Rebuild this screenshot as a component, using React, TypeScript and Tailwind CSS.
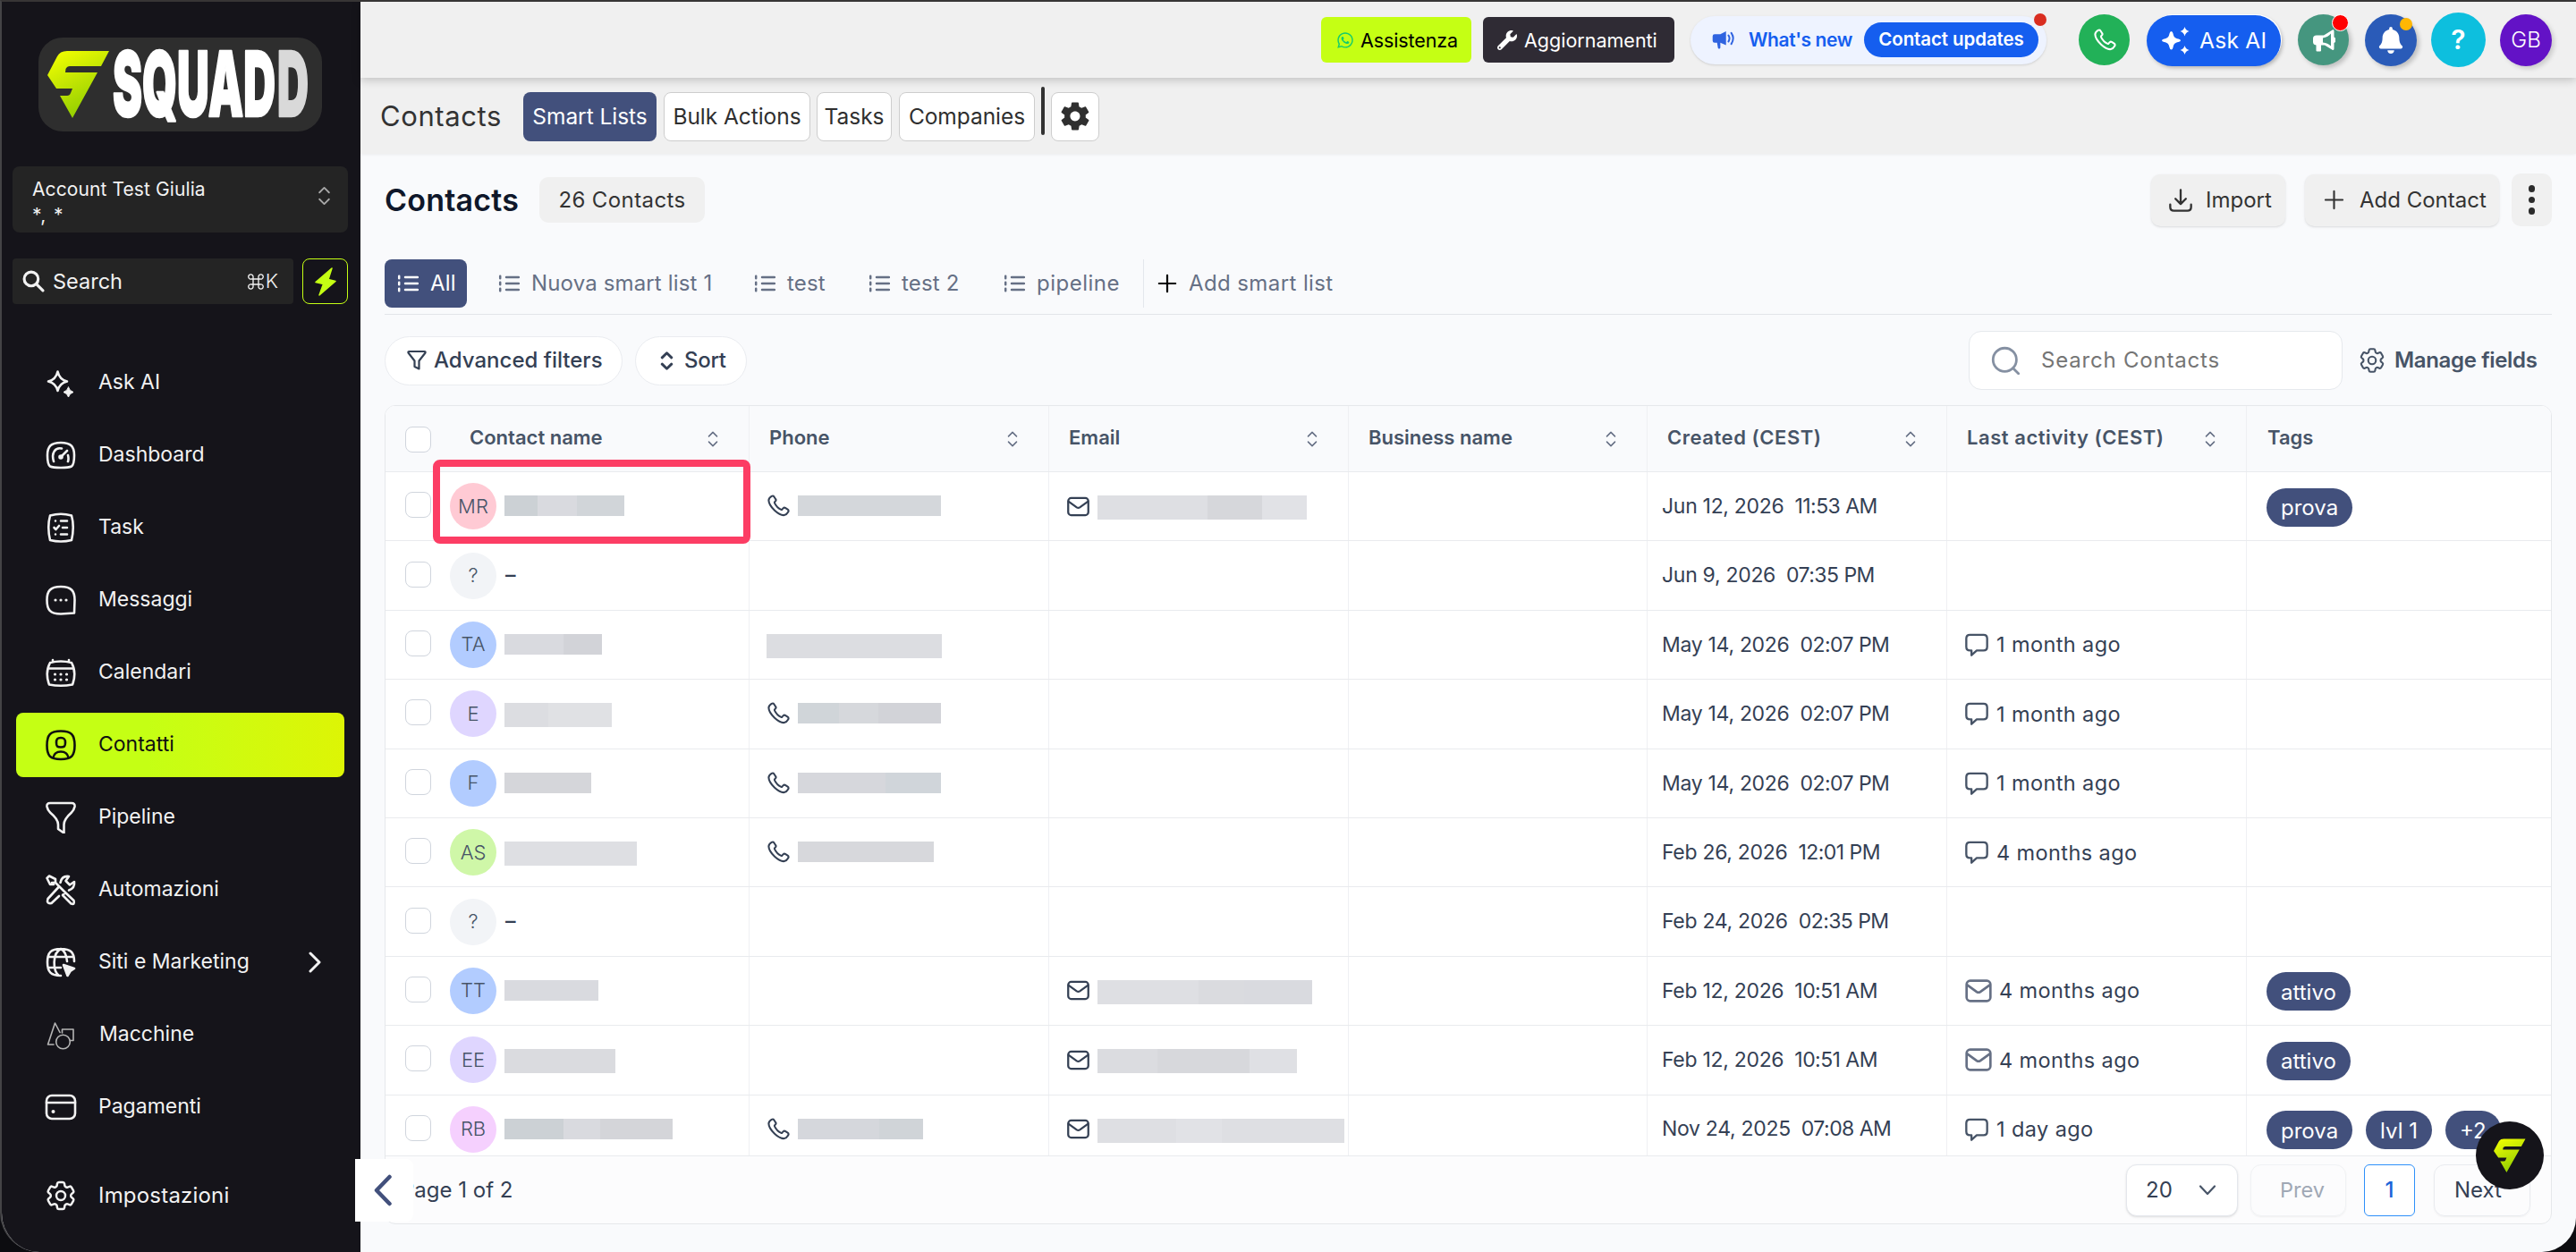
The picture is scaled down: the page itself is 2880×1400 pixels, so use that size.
import React from "react";
import { FaWhatsapp, FaWrench, FaBell } from "react-icons/fa";
import { HiOutlineCog6Tooth } from "react-icons/hi2";
import { IoMdSettings } from "react-icons/io";

type P = { className?: string };

function Svg({ className = "", box = 24, sw = 2, children }: P & { box?: number; sw?: number; children: React.ReactNode }) {
  return (
    <svg viewBox={`0 0 ${box} ${box}`} className={`shrink-0 ${className}`} fill="none" stroke="currentColor" strokeWidth={sw} strokeLinecap="round" strokeLinejoin="round">
      {children}
    </svg>
  );
}

/* ---------- brand ---------- */

function Mark({ className = "", id }: P & { id: string }) {
  return (
    <svg viewBox="0 0 70 76" preserveAspectRatio="none" className={`shrink-0 ${className}`}>
      <defs>
        <linearGradient id={id} x1="0.15" y1="0" x2="0.6" y2="1">
          <stop offset="0" stopColor="#f2ff00" />
          <stop offset="0.45" stopColor="#c4e603" />
          <stop offset="1" stopColor="#8ccc00" />
        </linearGradient>
      </defs>
      <path fill={`url(#${id})`} d="M22 1H69L60 18H25Q22 18 20.500 21L20 25H56L28 76L14 51H22Q25 51 26 48L28 43H10L0 28L11 7Q14 1 22 1Z" />
    </svg>
  );
}

function Logo() {
  return (
    <div className="ml-[41px] mt-10 flex h-[105px] w-[317px] items-start rounded-[27px] bg-[#2e2e2e] pl-[10px] pt-[13px]">
      <Mark id="brand" className="mt-px h-[76px] w-[70px]" />
      <svg viewBox="0 0 222 86" className="ml-[3px] h-[86px] w-[222px] overflow-visible font-['Inter',sans-serif]" strokeLinejoin="round">
        <text x="0" y="57.500" transform="scale(1 1.300)" textLength="182" lengthAdjust="spacingAndGlyphs" fontSize="77" fontWeight="900" fill="#fff" stroke="#fff" strokeWidth="2">
          SQUAD
        </text>
        <text x="184" y="57.500" transform="scale(1 1.300)" textLength="35" lengthAdjust="spacingAndGlyphs" fontSize="77" fontWeight="900" fill="#d9d9d9" stroke="#d9d9d9" strokeWidth="2">
          D
        </text>
      </svg>
    </div>
  );
}

/* ---------- icons ---------- */

const SortCaret = ({ className = "" }: P) => (
  <svg viewBox="0 0 14 20" className={`shrink-0 ${className}`} fill="none" stroke="currentColor" strokeWidth="1.700" strokeLinecap="round" strokeLinejoin="round">
    <path d="M2 6.500L7 1.500L12 6.500M2 13.500L7 18.500L12 13.500" />
  </svg>
);
const ListIcon = ({ className = "" }: P) => (
  <svg viewBox="0 0 24 20" className={`h-5 w-6 shrink-0 ${className}`} stroke="currentColor" strokeWidth="2.500" strokeLinecap="round" fill="none">
    <path d="M9 3H23M9 10H23M9 17H23M2.200 1.800V4.200M2.200 8.800V11.200M2.200 15.800V18.200" />
  </svg>
);
const PhoneIcon = ({ className = "" }: P) => (
  <Svg className={className} sw={1.900}>
    <path d="M8.400 8.900a13.400 13.400 0 0 0 6.700 6.700c.5.200.7.100 1-.3l1.200-1.300c.7-.6 1.300-.6 2-.2l2.500 1.600c1 .7 1.100 1.600.5 2.600-.9 1.600-2.200 3-4 3.300C13 22 2.400 12.500 2.200 5.900 2.300 4 3.700 2.700 5.200 1.800c1-.6 2-.4 2.600.5l1.600 2.500c.5.700.4 1.400-.2 2L8.300 7.800c-.2.300-.1.700.1 1.100Z" />
  </Svg>
);
const MailIcon = ({ className = "" }: P) => (
  <Svg className={className} sw={2}>
    <rect x="2" y="3.500" width="20" height="17" rx="3" />
    <path d="M2.500 7L10.500 12.800Q12 13.800 13.500 12.800L21.500 7" />
  </Svg>
);
const ChatIcon = ({ className = "" }: P) => (
  <Svg className={className} sw={2}>
    <path d="M5.500 2.500H18.500Q22 2.500 22 6V14Q22 17.500 18.500 17.500H12L7 22V17.500H5.500Q2 17.500 2 14V6Q2 2.500 5.500 2.500Z" />
  </Svg>
);
const FunnelIcon = ({ className = "", sw = 2 }: P & { sw?: number }) => (
  <Svg className={className} sw={sw}>
    <path d="M3.500 2H20.500Q22 2 21.500 3.500L14.500 12.500V21.500L9.500 19V12.500L2.500 3.500Q2 2 3.500 2Z" />
  </Svg>
);
const Sparkles = ({ className = "" }: P) => (
  <svg viewBox="0 0 31 31" className={`shrink-0 ${className}`} fill="currentColor">
    <path d="M10.500 5Q12 5 12.500 7.500C13.500 12 14.500 12.500 18.500 13.500Q21 14.200 21 15.300Q21 16.500 18.500 17C14.500 18 13.500 18.500 12.500 23Q12 25.500 10.500 25.500T8.500 23C7.500 18.500 6.500 18 2.500 17Q0 16.500 0 15.300Q0 14.200 2.500 13.500C6.500 12.500 7.500 12 8.500 7.500Q9 5 10.500 5Z" />
    <path d="M25.500 0Q26.500 4 30.500 5Q26.500 6 25.500 10.500Q24.500 6 20.500 5Q24.500 4 25.500 0Z" />
    <path d="M25.500 21Q26.500 25 30.500 26Q26.500 27 25.500 31Q24.500 27 20.500 26Q24.500 25 25.500 21Z" />
  </svg>
);

const nav: { label: string; icon: React.ReactNode; active?: boolean; more?: boolean; dim?: boolean }[] = [
  {
    label: "Ask AI",
    icon: (
      <>
        <path d="M14.500 5.500Q16.500 14.500 25 16.500Q16.500 18.500 14.500 27Q12.500 18.500 4 16.500Q12.500 14.500 14.500 5.500Z" />
        <path fill="currentColor" strokeWidth="1" d="M26.500 23Q27.500 27 32 28.500Q27.500 30 26.500 34Q25.500 30 21 28.500Q25.500 27 26.500 23Z" />
      </>
    ),
  },
  {
    label: "Dashboard",
    icon: (
      <>
        <path d="M18 4C29 4 33 8 33 18C33 24 32 29 30 30.500C26 32.500 10 32.500 6 30.500C4 29 3 24 3 18C3 8 7 4 18 4Z" />
        <path d="M10 25C7 15 12 9 19 10.500M26 18Q27 22 26 25M19 19L25 13" />
        <circle cx="18" cy="20" r="1.500" fill="currentColor" />
      </>
    ),
  },
  {
    label: "Task",
    icon: (
      <>
        <path d="M6 4.500Q18 1 30 4.500Q33.500 17 30 32Q18 35 6 32Q2.500 17 6 4.500Z" />
        <path d="M18 10.500H25M20 18H25M18 25.500H25M10.500 18L12.500 20L16 16" />
        <path d="M12 10.500h.01M12 25.500h.01" />
      </>
    ),
  },
  {
    label: "Messaggi",
    icon: (
      <>
        <path d="M18 3C30 3 33.500 8 33.500 18L33 32.500L18 33.500C6 33.500 2.500 29 2.500 18C2.500 8 6 3 18 3Z" />
        <path d="M12 18h.01M18 18h.01M24 18h.01" strokeWidth="3.200" />
      </>
    ),
  },
  {
    label: "Calendari",
    icon: (
      <>
        <path d="M6 7Q18 4 30 7Q36 18 31 31.500Q18 34 5 31.500Q0 18 6 7ZM3.500 13.500H32.500M9 6V4M27 6V4" />
        <path d="M11.500 20h.01M18 20h.01M24.500 20h.01M11.500 26h.01M18 26h.01M24.500 26h.01" strokeWidth="3.200" />
      </>
    ),
  },
  {
    label: "Contatti",
    active: true,
    icon: (
      <>
        <path d="M18 2.500C30 2.500 33.500 7 33.500 18.500C33.500 30 30 34 18 34C6 34 2.500 30 2.500 18.500C2.500 7 6 2.500 18 2.500Z" />
        <path d="M18 10C22 10 23 11.500 23 15.500S22 20.500 18 20.500S13 19.500 13 15.500S14 10 18 10ZM9.500 32Q11 25.500 18 25.500T26.500 32" />
      </>
    ),
  },
  { label: "Pipeline", icon: <path d="M6 2H30Q34 2 33.500 6Q33 9 30 12.500Q21.500 20 21.500 26V35.500L15 31V26Q15 20 6 12.500Q3 9 2.500 6Q2 2 6 2Z" /> },
  {
    label: "Automazioni",
    icon: (
      <>
        <path d="M2.500 5L5 2.500L12 6V10L25 23M12 10H8ZM2.500 5L6 12H10M23 21L32.500 30Q34 35 29.500 33.500L20 24Z" />
        <path d="M15.500 15L3.500 28Q1.500 34 7.500 33L16 25M17.500 10Q19 2 27 3L23.500 8L28 12.500L33 9Q34 16 27 18.500" />
      </>
    ),
  },
  {
    label: "Siti e Marketing",
    more: true,
    icon: (
      <>
        <path d="M33 17C33 7 29 3 18 3C7 3 3 7 3 18C3 29 7 33 18 33M18 3C8 8 9 28 16 33M18 3Q24 6 25 17M4 12H32M4 24H18" />
        <path fill="currentColor" d="M21 21L33 25L28.500 28L25.500 33Z" />
      </>
    ),
  },
  {
    label: "Macchine",
    dim: true,
    icon: (
      <>
        <path d="M10 29H3.500L11.500 5L17 15.500M19.500 16V12H32V24.500H29" />
        <circle cx="20.500" cy="26" r="7.800" />
      </>
    ),
  },
  {
    label: "Pagamenti",
    icon: (
      <>
        <rect x="2" y="5" width="32" height="26" rx="6" />
        <path d="M2 13H34" />
        <path d="M9.500 23h.01" strokeWidth="4" />
      </>
    ),
  },
];

function Sidebar() {
  return (
    <aside className="flex w-[401px] shrink-0 flex-col bg-[#15141a] text-[#f2f2f2]">
      <Logo />
      <div className="ml-3 mt-[39px] flex h-[74px] w-[375px] items-center justify-between rounded-lg bg-[#242424] pl-[22px] pr-[19px]">
        <div className="mt-[5px] text-[21px] leading-[29px] tracking-[0.100px]">
          <p>Account Test Giulia</p>
          <p className="tracking-[1.500px]">*, *</p>
        </div>
        <SortCaret className="-mt-2 h-[22px] w-[15px] text-[#a8a8a8]" />
      </div>
      <div className="ml-3 mt-[29px] flex w-[375px] justify-between">
        <div className="flex h-[51px] w-[314px] items-center rounded bg-[#242424] pl-[11px] pr-[17px]">
          <Svg className="size-[25px]" sw={3}>
            <circle cx="9.500" cy="9.500" r="7.500" />
            <path d="M15.500 15.500L22 22" />
          </Svg>
          <span className="ml-[9px] flex-1 text-[23.500px]">Search</span>
          <span className="flex items-center text-[22px] font-light">
            <Svg className="mr-0.5 size-[18px]" sw={1.800}>
              <path d="M8 8H16V16H8ZM8 8H5.500A3.500 3.500 0 1 1 8 5ZM16 8V5A3.500 3.500 0 1 1 18.500 8ZM16 16H18.500A3.500 3.500 0 1 1 16 19ZM8 16V19A3.500 3.500 0 1 1 5.500 16Z" />
            </Svg>
            K
          </span>
        </div>
        <div className="flex size-[51px] items-center justify-center rounded-lg border border-[#c5ff14] text-[#c5ff14]">
          <svg viewBox="0 0 24 32" className="h-8 w-6" fill="currentColor" stroke="currentColor" strokeWidth="1.500" strokeLinejoin="round">
            <path d="M19 1L1 16.500L9.500 18.500L5 31L23 15.500L15 13.500Z" />
          </svg>
        </div>
      </div>
      <nav className="ml-4 mt-[52px] flex w-[367px] flex-col gap-[9px]">
        {nav.map((n) => (
          <div key={n.label} className={n.active ? "flex h-[72px] items-center rounded-lg bg-linear-to-r from-[#c5ff14] from-40% to-[#ddf505] text-[#101010]" : "flex h-[72px] items-center"}>
            <Svg box={36} sw={n.dim ? 1.600 : 2.600} className={n.dim ? "ml-8 size-9 text-[#b5b5b5]" : "ml-8 size-9"}>
              {n.icon}
            </Svg>
            <span className={n.dim ? "ml-[25px] flex-1 text-[23px] -mt-px" : "ml-6 flex-1 text-[23px] -mt-px"}>{n.label}</span>
            {n.more && (
              <svg viewBox="0 0 14 24" className="mr-[26px] h-6 w-[14px]" fill="none" stroke="currentColor" strokeWidth="3" strokeLinecap="round" strokeLinejoin="round">
                <path d="M2 2L12 12L2 22" />
              </svg>
            )}
          </div>
        ))}
      </nav>
      <div className="ml-4 mt-[27px] flex h-[72px] items-center">
        <HiOutlineCog6Tooth className="ml-[30px] size-[40px]" />
        <span className="ml-[22px] text-[24px] tracking-[0.200px]">Impostazioni</span>
      </div>
    </aside>
  );
}

/* ---------- header ---------- */

function TopBar() {
  return (
    <header className="relative z-10 flex h-[85px] shrink-0 items-center justify-end bg-[#f0f0f0] pr-[27px] shadow-[0_2px_10px_rgba(0,0,0,0.220)]">
      <div className="flex h-[51px] w-[168px] items-center rounded-md bg-[#c5ff14] pl-[17px] text-[21.500px] tracking-[-0.100px] text-black">
        <FaWhatsapp className="mr-[7px] size-5 text-[#14cc6b]" />
        <span className="mt-0.5">Assistenza</span>
      </div>
      <div className="ml-[13px] flex h-[51px] w-[214px] items-center rounded-md bg-[#2f2b34] pl-[16px] text-[21.500px] tracking-[0px] text-white">
        <FaWrench className="mr-2 size-[22px]" />
        <span className="mt-0.5">Aggiornamenti</span>
      </div>
      <div className="relative ml-[18px] flex h-[54px] w-[398px] items-center rounded-full bg-[#eef3ff] pl-6 shadow-sm">
        <svg viewBox="0 0 28 22" className="h-[20px] w-[26px] text-[#2f63e0]" fill="currentColor">
          <path d="M17 0V17L10 14V20Q10 21.500 8.500 21.500T7 20L6 14H3Q0.500 14 0.500 11.500V6Q0.500 3.500 3 3.500H10Z" />
          <path d="M20 5Q22.500 8.500 20 12.500M23.500 2Q28 8.500 23.500 15.500" fill="none" stroke="currentColor" strokeWidth="2.200" strokeLinecap="round" />
        </svg>
        <span className="ml-[15px] w-[129px] text-[21px] font-semibold tracking-[-0.400px] text-[#155eef]">What's new</span>
        <span className="flex h-[39px] w-[195px] items-center justify-center rounded-full bg-[#155eef] text-[20.500px] font-semibold tracking-[-0.100px] text-white">Contact updates</span>
        <span className="absolute -top-[3px] right-0 size-[14px] rounded-full bg-[#d92d20]" />
      </div>
      <div className="ml-9 flex size-[57px] items-center justify-center rounded-full bg-[#22b158] text-white">
        <PhoneIcon className="size-[26px]" />
      </div>
      <div className="ml-[19px] mt-0.5 flex h-[57px] w-[150px] items-center rounded-full bg-[#155eef] pl-[17px] text-[24.500px] tracking-[0.300px] text-white shadow-[1px_-1px_0_#fff,2px_2px_4px_rgba(0,0,0,0.250)]">
        <Sparkles className="mr-[11px] size-[31px]" />
        Ask AI
      </div>
      <div className="relative ml-[19px] flex size-[57px] items-center justify-center rounded-full bg-[#45967f] text-white shadow-[3px_3px_5px_rgba(0,0,0,0.200)]">
        <svg viewBox="0 0 25 25" className="ml-0.5 mt-0.5 size-[25px]" fill="currentColor">
          <path d="M22.500 0Q23.500 0.500 23.500 2V8.500Q25.500 9.500 25.500 11.800T23.500 15V21.500Q23.500 23 22 23L13 17.500H9V23.500Q9 24.500 8 24.500H4.500Q3.500 24.500 3.500 23.500V17.500Q0 17 0 14V10Q0 6.500 4 6.500H12Z" />
          <path className="text-[#45967f]" d="M11 9.500Q17 8.500 20 4.500V18.500Q16.500 15 11 14.500Z" />
        </svg>
        <span className="absolute right-0 top-0 size-[19px] rounded-full border border-white bg-[#ff0000]" />
      </div>
      <div className="relative ml-[18px] flex size-[58px] items-center justify-center rounded-full bg-[#2a5bb8] text-white shadow-[3px_3px_5px_rgba(0,0,0,0.200)]">
        <FaBell className="size-[30px]" />
        <span className="absolute right-[5px] top-[4px] size-[14px] rounded-full bg-[#ffb703]" />
      </div>
      <div className="ml-4 flex size-[61px] items-center justify-center rounded-full bg-[#0dbfde] text-[30px] font-semibold text-white">?</div>
      <div className="ml-4 flex size-[58px] items-center justify-center rounded-full bg-[#6312c6] text-[24px] font-light text-white shadow-[3px_3px_5px_rgba(0,0,0,0.150)]">GB</div>
    </header>
  );
}

function SubNav() {
  const tab = "flex h-[55px] items-center justify-center rounded-lg border border-[#cdcdcd] bg-white text-[#2f2f2f]";
  return (
    <div className="flex h-[85px] shrink-0 items-center bg-[#f0f0f0] pl-[22px] pt-px text-[24.500px] tracking-[-0.050px] shadow-[0_1px_3px_rgba(0,0,0,0.060)]">
      <span className="w-[160px] text-[31px] font-normal tracking-[0.600px] text-[#333]">Contacts</span>
      <span className="flex h-[55px] w-[149px] items-center justify-center rounded-lg bg-[#42507c] text-white">Smart Lists</span>
      <span className={`${tab} ml-2 w-[164px]`}>Bulk Actions</span>
      <span className={`${tab} ml-[7px] w-[84px]`}>Tasks</span>
      <span className={`${tab} ml-2 w-[152px]`}>Companies</span>
      <span className="-mt-3 ml-[7px] h-[54px] w-1 rounded bg-[#333]" />
      <span className={`${tab} ml-[7px] w-[54px]`}>
        <IoMdSettings className="size-[38px] text-[#2f2f2f]" />
      </span>
    </div>
  );
}

function TitleRow() {
  return (
    <div className="flex h-[59px] items-center text-[24px] tracking-[0px] text-[#333]">
      <h1 className="w-[173px] text-[34px] font-semibold tracking-[0.200px] text-[#0f172a]">Contacts</h1>
      <span className="flex h-[51px] w-[185px] items-center justify-center rounded-[10px] bg-[#f0f0f0] text-[24px] tracking-[0.400px]">26 Contacts</span>
      <div className="ml-auto flex h-[58px] w-[150px] items-center rounded-[10px] bg-[#f0f0f0] pl-[19px] text-[24px] shadow-sm">
        <Svg className="mr-[14px] size-[28px]" sw={2}>
          <path d="M12 2V15M7 10.500L12 15.500L17 10.500M2 16V18.500Q2 22 5.500 22H18.500Q22 22 22 18.500V16" />
        </Svg>
        Import
      </div>
      <div className="ml-[22px] flex h-[58px] w-[217px] items-center rounded-[10px] bg-[#f0f0f0] pl-[21px] text-[24px] shadow-sm">
        <Svg className="mr-[17px] size-[23px]" sw={2.200}>
          <path d="M12 2V22M2 12H22" />
        </Svg>
        Add Contact
      </div>
      <div className="ml-[14px] flex h-[59px] w-[45px] flex-col items-center justify-center gap-[5px] rounded-[10px] bg-[#f0f0f0]">
        <i className="size-[7.500px] rounded-full bg-[#2b2b2b]" />
        <i className="size-[7.500px] rounded-full bg-[#2b2b2b]" />
        <i className="size-[7.500px] rounded-full bg-[#2b2b2b]" />
      </div>
    </div>
  );
}

function ListTabs() {
  return (
    <div className="mt-[37px] flex h-[62px] items-start border-b border-[#e2e5e9] text-[24px] tracking-[0.150px] text-[#667085]">
      <div className="flex h-[54px] w-[92px] items-center rounded-lg bg-[#42507c] pl-[14px] text-white">
        <ListIcon className="mr-[13px]" />
        All
      </div>
      <div className="ml-[35px] flex h-[54px] w-[286px] items-center">
        <ListIcon className="mr-[13px]" />
        Nuova smart list 1
      </div>
      <div className="flex h-[54px] w-[128px] items-center">
        <ListIcon className="mr-[13px]" />
        test
      </div>
      <div className="flex h-[54px] w-[151px] items-center">
        <ListIcon className="mr-[13px]" />
        test 2
      </div>
      <div className="flex h-[54px] w-[157px] items-center border-r border-[#e4e7ec] tracking-[0.500px]">
        <ListIcon className="mr-[13px]" />
        pipeline
      </div>
      <div className="ml-[15px] flex h-[54px] items-center tracking-[0.400px]">
        <Svg className="mr-[13px] size-[22px] text-black" sw={2.400}>
          <path d="M12 2V22M2 12H22" />
        </Svg>
        Add smart list
      </div>
    </div>
  );
}

function FilterRow() {
  return (
    <div className="mt-[18px] flex h-[66px] items-center text-[24px] font-medium text-[#344054]">
      <div className="flex h-[55px] w-[266px] items-center rounded-full border border-[#eaecf0] bg-white pl-[23px] tracking-[0px]">
        <FunnelIcon className="mr-[7px] size-6" sw={2.200} />
        Advanced filters
      </div>
      <div className="ml-[14px] flex h-[55px] w-[125px] items-center rounded-full border border-[#eaecf0] bg-white pl-[27px] tracking-[-0.300px]">
        <svg viewBox="0 0 14 20" className="mr-[12px] h-[21px] w-[15px]" fill="none" stroke="currentColor" strokeWidth="2.800" strokeLinecap="round" strokeLinejoin="round">
          <path d="M2 6.500L7 1.700L12 6.500M2 13.500L7 18.300L12 13.500" />
        </svg>
        Sort
      </div>
      <div className="ml-auto flex h-[66px] w-[418px] items-center rounded-[14px] border border-[#e6e9ed] bg-white pl-[24px] font-normal tracking-[0.800px] text-[#757575]">
        <Svg className="mr-[24px] size-8 text-[#8590a2]" sw={2.100}>
          <circle cx="11.500" cy="11.500" r="9.800" />
          <path d="M18.500 18.500L23 23" />
        </Svg>
        Search Contacts
      </div>
      <div className="ml-[16px] flex w-[218px] items-center text-[24px] font-semibold tracking-[-0.350px] text-[#475467]">
        <HiOutlineCog6Tooth className="mr-[8px] size-[34px]" />
        Manage fields
      </div>
    </div>
  );
}

/* ---------- table ---------- */

type Bar = { tall?: boolean; seg: [number, string][] };
type Row = {
  ini: string;
  color: string;
  name?: Bar;
  phone?: Bar;
  noIcon?: boolean;
  email?: Bar;
  date: string;
  time: string;
  act?: [string, string];
  tags?: string[];
};

const rows: Row[] = [
  { ini: "MR", color: "#ffcad4", name: { seg: [[37, "#ccd1d5"], [44, "#d9dadf"], [53, "#d1d5d9"]] }, phone: { seg: [[160, "#d4d7db"]] }, email: { tall: true, seg: [[123, "#dedfe3"], [61, "#d6d7db"], [50, "#e1e2e6"]] }, date: "Jun 12, 2026", time: "11:53 AM", tags: ["prova"] },
  { ini: "?", color: "#f2f4f7", date: "Jun 9, 2026", time: "07:35 PM" },
  { ini: "TA", color: "#b2ccff", name: { seg: [[66, "#d9dadf"], [43, "#d2d3d8"]] }, phone: { tall: true, seg: [[196, "#dcdde1"]] }, noIcon: true, date: "May 14, 2026", time: "02:07 PM", act: ["chat", "1 month ago"] },
  { ini: "E", color: "#dfd6ff", name: { tall: true, seg: [[49, "#dcdde1"], [71, "#e0e1e4"]] }, phone: { seg: [[46, "#d0d5d9"], [44, "#d6d8dc"], [70, "#d2d3d8"]] }, date: "May 14, 2026", time: "02:07 PM", act: ["chat", "1 month ago"] },
  { ini: "F", color: "#b2ccff", name: { seg: [[97, "#d5d6da"]] }, phone: { seg: [[98, "#d6d7dc"], [62, "#d0d5da"]] }, date: "May 14, 2026", time: "02:07 PM", act: ["chat", "1 month ago"] },
  { ini: "AS", color: "#cff7a8", name: { tall: true, seg: [[148, "#dedfe3"]] }, phone: { seg: [[152, "#d7d8dc"]] }, date: "Feb 26, 2026", time: "12:01 PM", act: ["chat", "4 months ago"] },
  { ini: "?", color: "#f2f4f7", date: "Feb 24, 2026", time: "02:35 PM" },
  { ini: "TT", color: "#b2ccff", name: { seg: [[105, "#d9dadf"]] }, email: { tall: true, seg: [[113, "#dedfe3"], [51, "#dadbdf"], [76, "#d9dadf"]] }, date: "Feb 12, 2026", time: "10:51 AM", act: ["mail", "4 months ago"], tags: ["attivo"] },
  { ini: "EE", color: "#dfd6ff", name: { tall: true, seg: [[124, "#dadbdf"]] }, email: { tall: true, seg: [[67, "#dbdce0"], [103, "#d7d8dc"], [53, "#dfe0e4"]] }, date: "Feb 12, 2026", time: "10:51 AM", act: ["mail", "4 months ago"], tags: ["attivo"] },
  { ini: "RB", color: "#f5d0fe", name: { seg: [[66, "#ccd1d5"], [41, "#d9dadf"], [81, "#d4d5d9"]] }, phone: { seg: [[91, "#d5d7dc"], [49, "#d0d4d8"]] }, email: { tall: true, seg: [[88, "#dedfe3"], [51, "#e1e2e6"], [137, "#dedfe3"]] }, date: "Nov 24, 2025", time: "07:08 AM", act: ["chat", "1 day ago"], tags: ["prova", "lvl 1", "+2"] },
];

function Redacted({ bar, className = "" }: P & { bar: Bar }) {
  return (
    <div className={`flex ${bar.tall ? "mt-[3px] h-[27px]" : "-mt-px h-[23px]"} ${className}`}>
      {bar.seg.map(([w, c], i) => (
        <span key={i} style={{ width: w, backgroundColor: c }} />
      ))}
    </div>
  );
}

const grid = "grid grid-cols-[407px_335px_335px_334px_335px_335px_340px]";
const cell = "flex items-center border-r border-[#eff0f3]";

function HeadCell({ label, first = false, last = false, wide = false }: { label: string; first?: boolean; last?: boolean; wide?: boolean }) {
  return (
    <div className={last ? "flex items-center pl-[23px]" : `${cell} pl-[22px]`}>
      {first && <span className="mt-0.5 mr-[43px] size-[29px] rounded-lg border border-[#d0d5dd] bg-white" />}
      <span className={wide ? "-mt-[3px] flex-1 tracking-[0.550px]" : "-mt-[3px] flex-1"}>{label}</span>
      {!last && <SortCaret className="mr-[33px] h-[18px] w-[14px] text-[#667085]" />}
    </div>
  );
}

function Table() {
  return (
    <section className="relative mt-[17px] h-[916px] overflow-hidden rounded-[12px] border border-[#e6e8eb] bg-[#fcfcfd]">
      <div className="h-[839px] overflow-hidden border-b border-[#e9ebee] bg-white">
        <div className={`${grid} h-[74px] border-b border-[#e9ebee] bg-[#f9fafc] text-[22px] font-semibold tracking-[0px] text-[#475467]`}>
          <HeadCell label="Contact name" first />
          <HeadCell label="Phone" />
          <HeadCell label="Email" />
          <HeadCell label="Business name" />
          <HeadCell label="Created (CEST)" wide />
          <HeadCell label="Last activity (CEST)" wide />
          <HeadCell label="Tags" last />
        </div>
        {rows.map((r, i) => (
          <div key={i} className={`${grid} h-[77.400px] border-b border-[#e9ebee] text-[23px] text-[#344054]`}>
            <div className={`${cell} pl-[22px]`}>
              <span className="-mt-[3px] size-[29px] rounded-lg border border-[#d0d5dd] bg-white" />
              <span className="ml-[21px] flex size-[52px] items-center justify-center rounded-full text-[22px] font-light text-[#475467]" style={{ backgroundColor: r.color }}>
                {r.ini}
              </span>
              {r.name ? <Redacted bar={r.name} className="ml-[9px]" /> : <span className="ml-[10px] font-medium">–</span>}
            </div>
            <div className={`${cell} pl-[19px]`}>
              {r.phone && !r.noIcon && <PhoneIcon className="mr-[9px] size-[26px]" />}
              {r.phone && <Redacted bar={r.phone} />}
            </div>
            <div className={`${cell} pl-[19px]`}>
              {r.email && <MailIcon className="mr-2 size-[27px]" />}
              {r.email && <Redacted bar={r.email} />}
            </div>
            <div className={cell} />
            <div className={`${cell} gap-[12px] whitespace-nowrap pl-4`}>
              <span className="tracking-[-0.300px]">{r.date}</span>
              <span className="tracking-[-0.550px]">{r.time}</span>
            </div>
            <div className={`${cell} pl-[19px] text-[23.500px] tracking-[0.400px]`}>
              {r.act?.[0] === "chat" && <ChatIcon className="mr-2 size-[28px] text-[#475467]" />}
              {r.act?.[0] === "mail" && <MailIcon className="mr-[7px] size-[32px] text-[#667085]" />}
              {r.act?.[1]}
            </div>
            <div className="flex items-center gap-[15px] pl-[22px] pt-0.5">
              {r.tags?.map((t) => (
                <span key={t} className="flex h-[43px] items-center rounded-full bg-[#42507c] px-[16px] pt-0.5 text-[24px] text-white">
                  {t}
                </span>
              ))}
            </div>
          </div>
        ))}
      </div>
      <div className="flex h-[75px] items-center pr-[23px] text-[24px] text-[#344054]">
        <span className="flex-1 pl-[17px]">Page 1 of 2</span>
        <span className="flex h-[58px] w-[125px] items-center justify-between rounded-[12px] border border-[#e4e7ec] bg-white pl-[21px] pr-[21px] shadow-sm">
          20
          <Svg className="size-[24px] text-[#475467]" sw={2.200}>
            <path d="M4 7.500L12 16L20 7.500" />
          </Svg>
        </span>
        <span className="ml-[14px] flex h-[58px] w-[107px] items-center rounded-[12px] border border-[#f0f2f4] pl-[32px] text-[23.500px] text-[#a0a8b5] shadow-xs">Prev</span>
        <span className="ml-[20px] flex h-[58px] w-[57px] items-center justify-center rounded-md border-[1.500px] border-[#2e90fa] bg-white font-medium text-[#1c64d8]">1</span>
        <span className="ml-[21px] flex h-[58px] w-[108px] items-center rounded-[12px] border border-[#e9ebef] pl-[22px] text-[24px] shadow-xs">Next</span>
      </div>
    </section>
  );
}

export default function App() {
  return (
    <div className="h-[1400px] w-[2880px] overflow-hidden bg-[#0c0c10] font-['Inter',sans-serif]">
      <div className="relative flex h-[1400px] w-[2880px] overflow-hidden rounded-bl-[44px] rounded-br-[38px] border-l-2 border-t-2 border-l-[#444446] border-t-[#373535] bg-[#f9fafc]">
        <Sidebar />
        <main className="flex min-w-0 flex-1 flex-col">
          <TopBar />
          <SubNav />
          <div className="pl-[27px] pr-[27px] pt-[22px]">
            <TitleRow />
            <ListTabs />
            <FilterRow />
            <Table />
          </div>
        </main>
        {/* focus frame around the first contact */}
        <div className="absolute left-[482px] top-[512px] h-[94px] w-[355px] rounded-[8px] border-8 border-[#fc3d64]" />
        {/* sidebar collapse handle */}
        <div className="absolute left-[395px] top-[1294px] flex h-[70px] w-[65px] items-center rounded-r-lg bg-white pl-[20px] text-[#42507c]">
          <svg viewBox="0 0 22 36" className="h-9 w-[22px]" fill="none" stroke="currentColor" strokeWidth="4.500" strokeLinecap="round" strokeLinejoin="round">
            <path d="M18.500 3L4 18L18.500 33" />
          </svg>
        </div>
        {/* chat launcher */}
        <div className="absolute left-[2766px] top-[1252px] flex size-[76px] items-center justify-center rounded-full bg-[#15141a]">
          <Mark id="chat" className="h-[38px] w-[36px]" />
        </div>
      </div>
    </div>
  );
}
